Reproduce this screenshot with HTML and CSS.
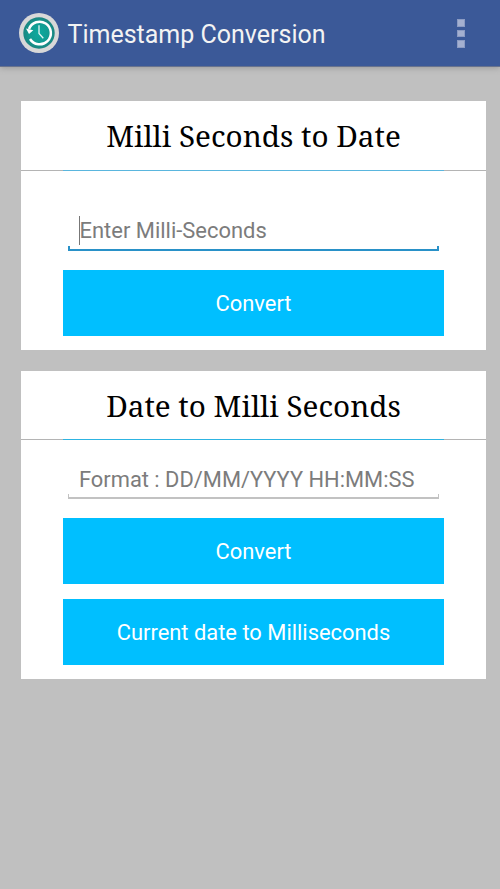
FILE: index.html
```
<!DOCTYPE html>
<html lang="en">
<head>
<meta charset="utf-8">
<title>Timestamp Conversion</title>
<link rel="stylesheet" href="styles.css">
</head>
<body>
<header class="bar">
  <svg class="logo" viewBox="0 0 40 40" width="40" height="40">
    <defs>
      <radialGradient id="face"><stop offset="0" stop-color="#0caa9f"/><stop offset="0.6" stop-color="#129c92"/><stop offset="1" stop-color="#1b8580"/></radialGradient>
    </defs>
    <circle cx="20" cy="20" r="20" fill="#d8d8d8"/>
    <circle cx="20" cy="20" r="15.700" fill="url(#face)"/>
    <path d="M10 16A11.300 11.300 0 1 1 11 26" fill="none" stroke="#fff" stroke-width="2.500"/>
    <path d="M7 15.500l7.300 1.700-4.300 3.800z" fill="#fff"/>
    <path d="M20 12.300v8.200l4.300 4.800" fill="none" stroke="#e4f5f3" stroke-width="1.300"/>
  </svg>
  <h1 class="title">Timestamp Conversion</h1>
  <div class="menu"><i></i><i></i><i></i></div>
</header>
<main class="content">
  <section class="card first">
    <h2 class="heading">Milli Seconds to Date</h2>
    <div class="rule"></div>
    <div class="form">
      <div class="field active"><span class="text">Enter Milli-Seconds</span></div>
      <button class="button">Convert</button>
    </div>
  </section>
  <section class="card second">
    <h2 class="heading">Date to Milli Seconds</h2>
    <div class="rule"></div>
    <div class="form">
      <div class="field"><span class="text">Format : DD/MM/YYYY HH:MM:SS</span></div>
      <button class="button">Convert</button>
      <button class="button">Current date to Milliseconds</button>
    </div>
  </section>
</main>
</body>
</html>
```

FILE: styles.css
```
* { box-sizing: border-box; }
body { margin: 0; min-height: 889px; background: #c0c0c0; font-family: Roboto, sans-serif; }
.bar { height: 67px; display: flex; align-items: center; padding: 0 35px 0 19px; background: linear-gradient(#3b5998 66px, #68738e 66px); box-shadow: 0 1px 6px #999; }
.logo { margin-bottom: 1px; }
.title { margin: 2px 0 0 8.5px; font-size: 25px; font-weight: 400; color: #f3f3f3; }
.menu { margin-left: auto; display: grid; gap: 3px; }
.menu i { width: 8px; height: 7.5px; background: #a4b0d0; border: 1px solid #8b9bc3; }
.content { padding: 34px 14px 0 21px; display: grid; gap: 21px; }
.card { background: #fff; }
.first { height: 249px; }
.second { height: 308px; }
.heading { margin: 0; height: 69px; font: 400 29.65px/69px "Noto Serif", "Droid Serif", "DejaVu Serif", serif; text-align: center; color: #000; }
.rule { height: 1px; background: linear-gradient(90deg, #b4b4b4 42px, #5ab6de 42px 423px, #b4b4b4 423px); }
.second .heading { height: 68px; }
.second .rule { background: linear-gradient(90deg, #b4b4b4 42px, #2db4e2 42px 423px, #b4b4b4 423px); }
.form { padding: 0 42px; display: grid; gap: 14px; }
.field { margin: 40px 5px 5px; height: 40px; display: grid; grid-template-rows: 35px 5px; }
.field::after { content: ""; border: solid #c2c2c2; border-width: 0 1px 2px; }
.active::after { border-color: #2991c8; border-width: 0 2px 2px; }
.second .field { margin-top: 19px; }
.text { justify-self: start; height: 29px; margin: 5px 0 0 11px; border-left: 1px solid transparent; font-size: 21.95px; line-height: 29px; color: #7c7c7c; }
.active .text { border-color: #777; text-indent: -0.5px; }
.second .text { margin-left: 10px; font-size: 21.87px; line-height: 31px; }
.button { height: 66px; padding: 0; border: 0; background: #00bfff; color: #fff; font: 21.9px Roboto, sans-serif; }
.second .button { padding-top: 1px; }
.second .button + .button { margin-top: 1px; }
```
